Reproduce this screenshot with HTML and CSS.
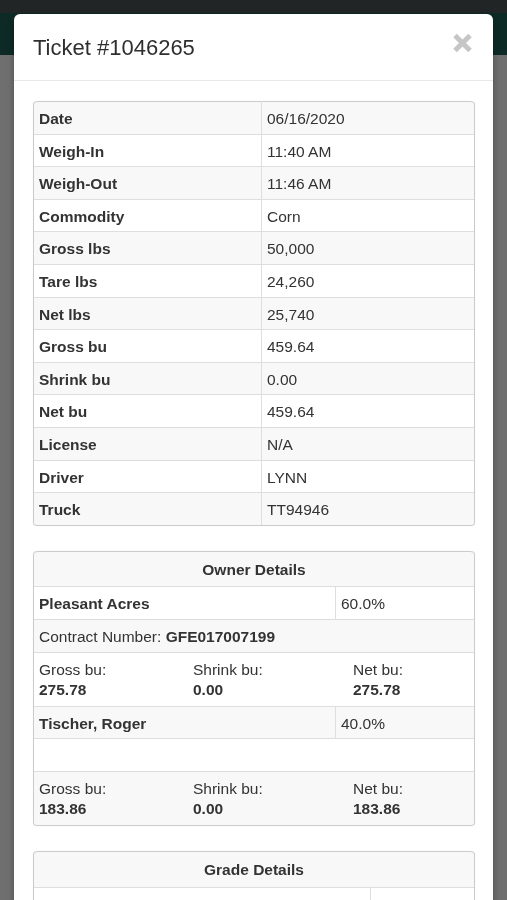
FILE: index.html
```html
<!DOCTYPE html>
<html lang="en">
<head>
  <meta charset="UTF-8">
  <meta name="viewport" content="width=device-width, initial-scale=1.0">
  <title>Ticket #1046265</title>
  <link rel="stylesheet" href="styles.css">
</head>
<body>
  <div class="topbar"></div>

  <div class="modal">
    <div class="modal-header">
      <h3>Ticket #1046265</h3>
      <button class="close" aria-label="Close">
        <svg width="21" height="20" viewBox="0 0 21 20">
          <path d="M3 2.5 L18 17.5 M18 2.5 L3 17.5" stroke="#c6c6c6" stroke-width="5"/>
        </svg>
      </button>
    </div>

    <div class="modal-body">
      <table class="grid ticket">
        <colgroup><col class="label-col"><col></colgroup>
        <tbody>
          <tr><th>Date</th><td>06/16/2020</td></tr>
          <tr><th>Weigh-In</th><td>11:40 AM</td></tr>
          <tr><th>Weigh-Out</th><td>11:46 AM</td></tr>
          <tr><th>Commodity</th><td>Corn</td></tr>
          <tr><th>Gross lbs</th><td>50,000</td></tr>
          <tr><th>Tare lbs</th><td>24,260</td></tr>
          <tr><th>Net lbs</th><td>25,740</td></tr>
          <tr><th>Gross bu</th><td>459.64</td></tr>
          <tr><th>Shrink bu</th><td>0.00</td></tr>
          <tr><th>Net bu</th><td>459.64</td></tr>
          <tr><th>License</th><td>N/A</td></tr>
          <tr><th>Driver</th><td>LYNN</td></tr>
          <tr><th>Truck</th><td>TT94946</td></tr>
        </tbody>
      </table>

      <table class="grid owners">
        <colgroup><col class="owner-col"><col></colgroup>
        <tbody>
          <tr class="head"><th colspan="2">Owner Details</th></tr>
          <tr><th>Pleasant Acres</th><td>60.0%</td></tr>
          <tr><td colspan="2">Contract Number: <b>GFE017007199</b></td></tr>
          <tr>
            <td colspan="2">
              <div class="split">
                <div>Gross bu:<b>275.78</b></div>
                <div>Shrink bu:<b>0.00</b></div>
                <div>Net bu:<b>275.78</b></div>
              </div>
            </td>
          </tr>
          <tr><th>Tischer, Roger</th><td>40.0%</td></tr>
          <tr><td colspan="2">&nbsp;</td></tr>
          <tr>
            <td colspan="2">
              <div class="split">
                <div>Gross bu:<b>183.86</b></div>
                <div>Shrink bu:<b>0.00</b></div>
                <div>Net bu:<b>183.86</b></div>
              </div>
            </td>
          </tr>
        </tbody>
      </table>

      <table class="grid grades">
        <colgroup><col class="grade-col"><col></colgroup>
        <tbody>
          <tr class="head"><th colspan="2">Grade Details</th></tr>
          <tr><th>Damage</th><td>0.5</td></tr>
          <tr><th>Moisture</th><td>15.0</td></tr>
          <tr><th>Test Weight</th><td>56.0</td></tr>
        </tbody>
      </table>
    </div>
  </div>
</body>
</html>
```

FILE: styles.css
```css
body {
  margin: 0;
  background: #6f6f6f;
  font-family: "Liberation Sans", Arial, sans-serif;
  color: #333;
  overflow: hidden;
}
.topbar {
  height: 42px;
  border-top: 13px solid #212525;
  background: #0e2a26;
}
.modal {
  position: fixed;
  top: 14px;
  left: 14px;
  width: 479px;
  bottom: -40px;
  background: #fff;
  border-radius: 6px 6px 0 0;
  box-shadow: 0 3px 7px rgba(0, 0, 0, 0.3);
}
.modal-header {
  height: 66px;
  padding: 0 20px 0 19px;
  display: flex;
  justify-content: space-between;
  align-items: center;
  border-bottom: 1px solid #e8e8e8;
}
.modal-header h3 {
  margin: 0;
  padding-top: 2px;
  font-size: 22px;
  font-weight: normal;
  color: #2f2f2f;
}
.close {
  align-self: flex-start;
  margin-top: 19px;
  padding: 0;
  border: none;
  background: none;
  line-height: 0;
}
.modal-body {
  padding: 20px 18px 0 19px;
}
.grid {
  width: 100%;
  border-collapse: separate;
  border-spacing: 0;
  border: 1px solid #cbcbcb;
  border-top: none;
  border-radius: 4px;
  margin-bottom: 25px;
  font-size: 15.5px;
  line-height: 19.6px;
  box-shadow: 0 0 1px rgba(0, 0, 0, 0.1);
}
.grid th,
.grid td {
  padding: 7px 5px 5px;
  text-align: left;
  vertical-align: top;
  border-top: 1px solid #dedede;
  color: #333;
}
.grid tr:first-child th,
.grid tr:first-child td {
  border-top-color: #cbcbcb;
}
.grid td + td,
.grid th + td {
  border-left: 1px solid #dedede;
}
.grid th {
  font-weight: bold;
}
.grid td {
  font-weight: normal;
}
.grid tbody tr:nth-child(odd) th,
.grid tbody tr:nth-child(odd) td {
  background: #f8f8f8;
}
.grid tr:first-child > :first-child {
  border-top-left-radius: 4px;
}
.grid tr:first-child > :last-child {
  border-top-right-radius: 4px;
}
.grid tr:last-child > :first-child {
  border-bottom-left-radius: 4px;
}
.grid tr:last-child > :last-child {
  border-bottom-right-radius: 4px;
}
.label-col {
  width: 227px;
}
.owner-col {
  width: 301px;
}
.grade-col {
  width: 336px;
}
.grid tr.head th {
  background: #dddddd;
  text-align: center;
  padding: 8px 5px 7px;
}
.split {
  display: grid;
  grid-template-columns: 154px 160px 1fr;
  line-height: 20.6px;
}
.split b {
  display: block;
}
```
